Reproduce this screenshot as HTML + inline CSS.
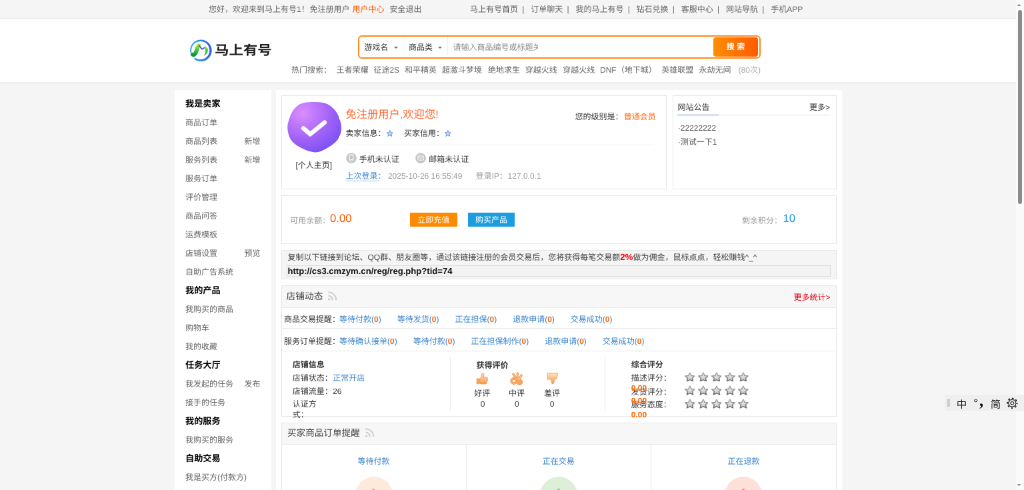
<!DOCTYPE html>
<html lang="zh-CN">
<head>
<meta charset="utf-8">
<title>马上有号 - 用户中心</title>
<style>
html,body{margin:0;padding:0;width:1024px;height:490px;overflow:hidden;background:#f5f5f5}
body{font-family:"Liberation Sans","Noto Sans CJK SC",sans-serif;font-size:12px;color:#666;text-rendering:geometricPrecision}
#page{position:absolute;left:0;top:0;width:1524px;height:735px;transform:scale(.666667);transform-origin:0 0;background:#f5f5f5;overflow:hidden;will-change:transform}
#page *{box-sizing:border-box}
.abs{position:absolute;white-space:nowrap}
a{color:inherit;text-decoration:none}
/* top bar */
#topbar{position:absolute;left:0;top:0;width:1524px;height:28px;background:#f5f5f5;border-bottom:1px solid #eaeaea}
#topbar .t{position:absolute;top:0;line-height:29px;white-space:nowrap;color:#666}
#topbar .sep{display:inline-block;width:19.2px;text-align:center;color:#666;text-indent:-3.6px}
/* header */
#header{position:absolute;left:0;top:29px;width:1524px;height:97px;background:#fff;border-bottom:3px solid #f0f0f0}
#sbox{position:absolute;left:537px;top:52.5px;width:604px;height:35px;border:2px solid #ff8a1a;border-radius:6px;background:#fff}
#sbtn{position:absolute;left:1070.2px;top:56.4px;width:66.6px;height:28.2px;border-radius:4px;background:linear-gradient(90deg,#ff8e00,#ff5a00);color:#fff;font-weight:bold;font-size:12px;line-height:28.4px;text-align:center}
.hot{position:absolute;top:95px;line-height:20px;white-space:nowrap;color:#666}
/* sidebar */
#side{position:absolute;left:262px;top:135px;width:145px;height:620px;background:#fff;padding:6.7px 0 0 16px}
#side div{height:28px;line-height:28px;position:relative;white-space:nowrap;color:#666}
#side div.h{font-weight:700;font-size:13.2px;color:#000;top:.7px}
#side div b{position:absolute;left:88.5px;top:0;font-weight:normal}
/* main */
#main{position:absolute;left:414px;top:135px;width:849px;height:620px;background:#fff}
.box{position:absolute;border:1px solid #e6e6e6;background:#fff}
.blue{color:#3b84cf}
.org{color:#ff6600}
.row span{display:inline-block;margin-right:24px}
.row i{font-style:normal;font-weight:bold;color:#ff6600}
</style>
</head>
<body>
<div id="page">

<div id="topbar">
  <span class="t" style="left:313px">您好，欢迎来到马上有号1！</span>
  <span class="t" style="left:464.5px">免注册用户</span>
  <span class="t" style="left:528.5px;color:#ff5a00">用户中心</span>
  <span class="t" style="left:584.5px">安全退出</span>
  <span class="t" style="left:705px">马上有号首页<span class="sep">|</span>订单聊天<span class="sep">|</span>我的马上有号<span class="sep">|</span>钻石兑换<span class="sep">|</span>客服中心<span class="sep">|</span>网站导航<span class="sep">|</span>手机APP</span>
</div>

<div id="header"></div>
<!-- logo -->
<svg class="abs" style="left:284px;top:59px" width="34" height="34" viewBox="0 0 34 34">
  <defs>
    <linearGradient id="lg1" x1="0" y1="0" x2="1" y2="0"><stop offset="0" stop-color="#43a8f9"/><stop offset=".45" stop-color="#2f8af5"/><stop offset="1" stop-color="#2a60e4"/></linearGradient>
    <linearGradient id="lg2" x1="0" y1="0" x2="0" y2="1"><stop offset="0" stop-color="#9be83a"/><stop offset=".55" stop-color="#3cc03c"/><stop offset="1" stop-color="#0f9640"/></linearGradient>
  </defs>
  <path d="M17.3 .5 A16.3 16.3 0 1 0 17.31 .5Z M16.7 3 A13.6 13.6 0 1 1 16.69 3Z" fill="url(#lg1)" fill-rule="evenodd"/>
  <path d="M-1 18.2 L6 19.4 L8.4 27.6 L6.2 30.4 L3 29 Z" fill="#fff"/>
  <path d="M5 22.8 C7.6 24.6 9.8 20.6 11.2 15.8 C12.2 12.2 13 10 14.2 9.4" fill="none" stroke="url(#lg2)" stroke-width="6" stroke-linecap="round"/>
  <path d="M1.6 17.6 L3.4 20.2 L2.2 21.6 Z" fill="#173fa8"/>
  <path d="M14.6 9.4 L18.9 14.8 L24.2 11.8" fill="none" stroke="#2a5fd6" stroke-width="1.8" stroke-linejoin="round" stroke-linecap="round"/>
  <path d="M23.6 10.8 C29.6 11.8 30 20.6 21.8 25 C24.8 20.6 24.8 16 22.8 13 Z" fill="url(#lg2)"/>
</svg>
<div class="abs" id="logotxt" style="left:322px;top:59px;font-size:19.5px;line-height:34px;font-weight:700;color:#222;letter-spacing:0px;transform:scaleX(1.1);transform-origin:0 50%">马上有号</div>

<div id="sbox"></div>
<div class="abs" style="left:546.3px;top:61.2px;line-height:20px;color:#333">游戏名</div>
<div class="abs" style="left:590.5px;top:69.5px;width:0;height:0;border:3px solid transparent;border-top:3.6px solid #666;border-bottom:0"></div>
<div class="abs" style="left:604px;top:55px;width:1px;height:30px;background:#eee"></div>
<div class="abs" style="left:613px;top:61.2px;line-height:20px;color:#333">商品类</div>
<div class="abs" style="left:656.5px;top:69.5px;width:0;height:0;border:3px solid transparent;border-top:3.6px solid #666;border-bottom:0"></div>
<div class="abs" style="left:671px;top:55px;width:1px;height:30px;background:#eee"></div>
<div class="abs" style="left:679.6px;top:61.2px;line-height:20px;color:#8a8a8a;width:127px;overflow:hidden">请输入商品编号或标题关</div>
<div id="sbtn">搜 索</div>

<span class="hot" style="left:437px">热门搜索：</span>
<span class="hot" style="left:504.5px">王者荣耀</span>
<span class="hot" style="left:560.4px">征途2S</span>
<span class="hot" style="left:607px">和平精英</span>
<span class="hot" style="left:662.9px">超激斗梦境</span>
<span class="hot" style="left:731.9px">绝地求生</span>
<span class="hot" style="left:787.8px">穿越火线</span>
<span class="hot" style="left:844.2px">穿越火线</span>
<span class="hot" style="left:900px">DNF（地下城）</span>
<span class="hot" style="left:992.3px">英雄联盟</span>
<span class="hot" style="left:1048.5px">永劫无间</span>
<span class="hot" style="left:1107.6px;color:#aaa">(80次)</span>

<div id="side">
  <div class="h">我是卖家</div>
  <div>商品订单</div>
  <div>商品列表<b>新增</b></div>
  <div>服务列表<b>新增</b></div>
  <div>服务订单</div>
  <div>评价管理</div>
  <div>商品问答</div>
  <div>运费模板</div>
  <div>店铺设置<b>预览</b></div>
  <div>自助广告系统</div>
  <div class="h">我的产品</div>
  <div>我购买的商品</div>
  <div>购物车</div>
  <div>我的收藏</div>
  <div class="h">任务大厅</div>
  <div>我发起的任务<b>发布</b></div>
  <div>接手的任务</div>
  <div class="h">我的服务</div>
  <div>我购买的服务</div>
  <div class="h">自助交易</div>
  <div>我是买方(付款方)</div>
  <div>我是卖方(收款方)</div>
</div>

<div id="main"></div>
<!-- user box -->
<div class="box" style="left:422px;top:142.5px;width:577.5px;height:141.5px"></div>
<svg class="abs" style="left:430px;top:151px" width="84" height="80" viewBox="0 0 84 80">
  <defs>
    <radialGradient id="av" cx="0.28" cy="0.22" r="0.95"><stop offset="0" stop-color="#dc8cff"/><stop offset="0.55" stop-color="#a062f7"/><stop offset="1" stop-color="#6f4cf2"/></radialGradient>
  </defs>
  <path d="M17.1 9.1 Q22.4 3.8 37.2 3.5 L42.8 3.5 Q57.6 3.2 64.6 9.2 L67.3 11.5 Q74.3 17.5 77.3 27.4 L78.5 31.1 Q81.5 41.0 78.5 49.2 L77.3 52.4 Q74.3 60.6 61.2 68.2 L56.1 71.0 Q43.0 78.6 28.6 71.6 L23.1 69.0 Q8.7 62.0 5.8 52.3 L4.7 48.7 Q1.8 39.0 5.1 29.6 L6.4 25.9 Q9.7 16.5 15.0 11.2 Z" fill="url(#av)" transform="translate(42 40.5) scale(1.055) translate(-42 -40)"/>
  <path d="M25.2 41.5 L35.3 50.3 L56.8 32.8" fill="none" stroke="#fff" stroke-width="6.6" stroke-linecap="round" stroke-linejoin="round"/>
</svg>
<div class="abs" style="left:443.4px;top:238px;line-height:20px;color:#333">[个人主页]</div>
<div class="abs" style="left:518.4px;top:160.2px;line-height:24px;font-size:16.3px;color:#ff6a33">免注册用户,欢迎您!</div>
<div class="abs" style="left:518.4px;top:190px;line-height:20px;color:#333">卖家信息：</div>
<svg class="abs star" style="left:579.6px;top:195.2px" width="9.6" height="9.6" viewBox="0 0 20 20"><path d="M10 1 L12.8 7.2 19.5 8 14.5 12.6 15.9 19.2 10 15.8 4.1 19.2 5.5 12.6 .5 8 7.2 7.2Z" fill="#c4dafa" stroke="#6b9ce6" stroke-width="2.2" stroke-linejoin="round"/></svg>
<div class="abs" style="left:606px;top:190px;line-height:20px;color:#333">买家信用：</div>
<svg class="abs star" style="left:666.6px;top:195.2px" width="9.6" height="9.6" viewBox="0 0 20 20"><path d="M10 1 L12.8 7.2 19.5 8 14.5 12.6 15.9 19.2 10 15.8 4.1 19.2 5.5 12.6 .5 8 7.2 7.2Z" fill="#c4dafa" stroke="#6b9ce6" stroke-width="2.2" stroke-linejoin="round"/></svg>
<div class="abs" style="left:518.4px;top:217px;width:464px;height:1px;background:#ececec"></div>
<!-- phone icon -->
<svg class="abs" style="left:518.8px;top:228.5px" width="16" height="16" viewBox="0 0 16 16"><defs><linearGradient id="gg" x1="0" y1="0" x2="0" y2="1"><stop offset="0" stop-color="#cdcdcd"/><stop offset="1" stop-color="#bdbdbd"/></linearGradient></defs><circle cx="8" cy="8" r="7.8" fill="url(#gg)"/><rect x="5.2" y="3.4" width="5.6" height="9.2" rx="1.2" fill="none" stroke="#f6f6f6" stroke-width="1.2"/><path d="M5.4 10.4 H10.6" stroke="#f6f6f6" stroke-width="1"/></svg>
<div class="abs" style="left:538.8px;top:228.5px;line-height:20px;color:#333">手机未认证</div>
<svg class="abs" style="left:623.2px;top:228.5px" width="16" height="16" viewBox="0 0 16 16"><circle cx="8" cy="8" r="7.8" fill="url(#gg)"/><rect x="3.8" y="5" width="8.4" height="6.2" rx=".8" fill="none" stroke="#f6f6f6" stroke-width="1.2"/><path d="M4.2 5.6 L8 8.6 11.8 5.6" fill="none" stroke="#f6f6f6" stroke-width="1.1"/></svg>
<div class="abs" style="left:643.2px;top:228.5px;line-height:20px;color:#333">邮箱未认证</div>
<div class="abs blue" style="left:518.4px;top:254px;line-height:20px">上次登录：<span style="position:absolute;left:0;top:17.2px;width:51px;height:1px;background:#9cc2ec"></span></div>
<div class="abs" style="left:581.9px;top:254px;line-height:20px;color:#999">2025-10-26 16:55:49</div>
<div class="abs" style="left:713.7px;top:254px;line-height:20px;color:#999">登录IP：</div>
<div class="abs" style="left:761.6px;top:254px;line-height:20px;color:#999">127.0.0.1</div>
<div class="abs" style="left:862.4px;top:164.5px;line-height:20px;color:#333">您的级别是：</div>
<div class="abs" style="left:935.7px;top:164.5px;line-height:20px;color:#ff6600">普通会员</div>

<!-- notice box -->
<div class="box" style="left:1008.5px;top:142.5px;width:246.5px;height:141.5px"></div>
<div class="abs" style="left:1016.4px;top:150.5px;line-height:20px;color:#333">网站公告</div>
<div class="abs" style="left:1214px;top:150.5px;line-height:20px;color:#333">更多&gt;</div>
<div class="abs" style="left:1016.4px;top:172.3px;width:229.4px;height:1px;background:#dedede"></div>
<div class="abs" style="left:1016.4px;top:171.9px;width:61.6px;height:1.4px;background:#5589ea"></div>
<div class="abs" style="left:1016.8px;top:182.3px;line-height:20px;color:#555">·22222222</div>
<div class="abs" style="left:1016.8px;top:203.3px;line-height:20px;color:#555">·测试一下1</div>

<!-- balance box -->
<div class="box" style="left:422px;top:293px;width:833px;height:72.5px"></div>
<div class="abs" style="left:435.2px;top:320.5px;line-height:20px;color:#999">可用余额：</div>
<div class="abs" style="left:495px;top:315.6px;line-height:24px;font-size:16.8px;color:#ff5a00">0.00</div>
<div class="abs" style="left:614.7px;top:318.6px;width:71.3px;height:21.8px;line-height:22.6px;background:#ff8a00;color:#fff;text-align:center">立即充值</div>
<div class="abs" style="left:701.7px;top:318.6px;width:70.5px;height:21.8px;line-height:22.6px;background:#1b9ee0;color:#fff;text-align:center">购买产品</div>
<div class="abs" style="left:1112.9px;top:320.5px;line-height:20px;color:#999">剩余积分：</div>
<div class="abs" style="left:1174.5px;top:315.6px;line-height:24px;font-size:16.8px;color:#1b9ee0">10</div>

<!-- referral box -->
<div class="box" style="left:422px;top:374.5px;width:833px;height:44.5px;background:#f5f5f5"></div>
<div class="abs" style="left:431.5px;top:376px;line-height:20px;color:#444">复制以下链接到论坛、QQ群、朋友圈等，通过该链接注册的会员交易后，您将获得每笔交易额<b style="color:#f00;font-size:13.4px">2%</b>做为佣金，鼠标点点，轻松赚钱^_^</div>
<div class="abs" style="left:429.5px;top:398px;width:816.5px;height:16.5px;border:1px solid #dcdcdc;background:#f3f3f3"></div>
<div class="abs" id="url" style="left:431.5px;top:397.2px;line-height:20px;color:#111;font-weight:bold;font-size:13.1px;letter-spacing:0">http://cs3.cmzym.cn/reg/reg.php?tid=74</div>

<!-- shop dynamics -->
<div class="box" style="left:422px;top:427.5px;width:833px;height:197px"></div>
<div class="abs" style="left:423px;top:428.5px;width:831px;height:33px;background:#f7f7f7;border-bottom:1px solid #e8e8e8"></div>
<div class="abs" style="left:429.6px;top:433.3px;line-height:24px;font-size:13.7px;color:#444">店铺动态</div>
<svg class="abs" style="left:491px;top:435.6px" width="15.5" height="15.5" viewBox="0 0 14 14" fill="none" stroke="#cfcfcf" stroke-width="1.9"><circle cx="2.4" cy="11.6" r="1.5" fill="#cfcfcf" stroke="none"/><path d="M1.2 6.8 A6 6 0 0 1 7.2 12.8"/><path d="M1.2 2 A10.8 10.8 0 0 1 12 12.8"/></svg>
<div class="abs" style="left:1190.4px;top:436px;line-height:20px;color:#e60012">更多统计&gt;</div>

<div class="abs" style="left:425.9px;top:469px;line-height:20px;color:#333">商品交易提醒：</div>
<div class="abs blue row" style="left:509.1px;top:469px;line-height:20px"><span>等待付款(<i>0</i>)</span><span>等待发货(<i>0</i>)</span><span>正在担保(<i>0</i>)</span><span>退款申请(<i>0</i>)</span><span>交易成功(<i>0</i>)</span></div>
<div class="abs" style="left:423px;top:492.3px;width:831px;height:1px;background:#e8e8e8"></div>
<div class="abs" style="left:425.9px;top:501.5px;line-height:20px;color:#333">服务订单提醒：</div>
<div class="abs blue row" style="left:509.1px;top:501.5px;line-height:20px"><span>等待确认接单(<i>0</i>)</span><span>等待付款(<i>0</i>)</span><span>正在担保制作(<i>0</i>)</span><span>退款申请(<i>0</i>)</span><span>交易成功(<i>0</i>)</span></div>
<div class="abs" style="left:423px;top:526px;width:831px;height:1px;background:#e8e8e8"></div>

<!-- shop info -->
<div class="abs" style="left:438.75px;top:537.3px;line-height:20px;color:#333;font-weight:bold">店铺信息</div>
<div class="abs" style="left:438.75px;top:557.2px;line-height:20px;color:#333">店铺状态：<span class="blue" style="position:absolute;left:60.4px">正常开店</span></div>
<div class="abs" style="left:438.75px;top:576.6px;line-height:20px;color:#333">店铺流量：<span style="position:absolute;left:60.4px">26</span></div>
<div class="abs" style="left:438.75px;top:595.6px;line-height:20px;color:#333">认证方</div>
<div class="abs" style="left:438.75px;top:611.7px;line-height:20px;color:#333">式：</div>
<div class="abs" style="left:674.5px;top:535.5px;width:1px;height:80px;background:#e8e8e8"></div>
<div class="abs" style="left:714.6px;top:538.4px;line-height:20px;color:#333;font-weight:bold">获得评价</div>
<!-- thumbs -->
<svg class="abs" style="left:0;top:0" width="0" height="0"><defs><linearGradient id="og" x1="0" y1="0" x2="0" y2="1"><stop offset="0" stop-color="#ffe2c4"/><stop offset="1" stop-color="#f89a48"/></linearGradient></defs></svg>
<svg class="abs" style="left:714px;top:557.5px" width="19" height="19.5" viewBox="0 0 19 19.5"><path d="M1.2 10 H4.6 V18 H1.2Z" fill="#f8a55c" stroke="#ee8a42" stroke-width=".7"/><path d="M5.6 10 C7.8 8.2 8.6 5.6 8.9 3 C9.1 1.2 11.8 1.4 11.9 4 C11.9 5.6 11.5 7 11 8.2 H15.8 C17.8 8.2 18 10.4 16.8 11 C17.8 11.8 17.4 13.4 16.4 13.8 C17 14.8 16.4 16 15.6 16.2 C16 17.2 15.2 18 14 18 H8 C7 18 6.4 17.6 5.6 17.2Z" fill="url(#og)" stroke="#ee8a42" stroke-width=".8" stroke-linejoin="round"/></svg>
<svg class="abs" style="left:765px;top:557.5px" width="20" height="20" viewBox="0 0 20 20"><g stroke="#ee8a42" stroke-width="3.3" stroke-linecap="round"><path d="M11 11.5 L4.8 3"/><path d="M12.2 11 L11.2 2"/><path d="M13.6 11.4 L17 5"/></g><path d="M9.5 11.5 C12 9.5 16 10 18 12.6 C19.6 15 18.6 18.6 15.4 19.2 C12.6 19.6 10.4 18 9.6 15.8Z" fill="#f9a55c" stroke="#ee8a42" stroke-width=".8"/><g stroke="#fbc088" stroke-width="1.9" stroke-linecap="round"><path d="M11 11.5 L4.8 3"/><path d="M12.2 11 L11.2 2"/><path d="M13.6 11.4 L17 5"/></g><path d="M6 8.2 A5.2 5.2 0 1 0 6.01 8.2Z M6 11.2 A2.2 2.2 0 1 1 5.99 11.2Z" fill="#f9ad68" fill-rule="evenodd" stroke="#ee8a42" stroke-width=".8"/></svg>
<svg class="abs" style="left:819.6px;top:557.8px" width="18" height="19" viewBox="0 0 20 20"><path d="M1.5 1.5 H17.5 Q18.7 1.5 18.4 3 L16.6 10 Q16.2 11.6 14.5 11.6 H12.6 Q12.7 15 12 17.6 Q11.4 19.6 9.6 19.2 Q8 18.8 8.4 16.5 Q8.8 13.6 6 11.6 H1.5Z" fill="url(#og)" stroke="#ee8a42" stroke-width=".8" stroke-linejoin="round"/></svg>
<div class="abs" style="left:693.2px;top:579.5px;width:60px;text-align:center;line-height:20px;color:#333">好评</div>
<div class="abs" style="left:694px;top:595.9px;width:60px;text-align:center;line-height:20px;color:#333">0</div>
<div class="abs" style="left:745px;top:579.5px;width:60px;text-align:center;line-height:20px;color:#333">中评</div>
<div class="abs" style="left:745.3px;top:595.9px;width:60px;text-align:center;line-height:20px;color:#333">0</div>
<div class="abs" style="left:797.9px;top:579.5px;width:60px;text-align:center;line-height:20px;color:#333">差评</div>
<div class="abs" style="left:798px;top:595.9px;width:60px;text-align:center;line-height:20px;color:#333">0</div>
<div class="abs" style="left:906.6px;top:535.5px;width:1px;height:80px;background:#e8e8e8"></div>
<div class="abs" style="left:946.8px;top:537.3px;line-height:20px;color:#333;font-weight:bold">综合评分</div>
<div class="abs" style="left:946.8px;top:557.3px;line-height:20px;color:#333">描述评分：</div>
<div class="abs" style="left:946.8px;top:577.9px;line-height:20px;color:#333">发货评分：</div>
<div class="abs" style="left:946.8px;top:596.9px;line-height:20px;color:#333">服务态度：</div>
<div class="abs" style="left:946.8px;top:571.5px;line-height:20px;color:#ff6600;font-weight:bold">0.00</div>
<div class="abs" style="left:946.8px;top:591px;line-height:20px;color:#ff6600;font-weight:bold">0.00</div>
<div class="abs" style="left:946.8px;top:612.2px;line-height:20px;color:#ff6600;font-weight:bold">0.00</div>
<svg class="abs" style="left:1026.6px;top:557.6px" width="15.8" height="14.8" viewBox="0 0 20 20" preserveAspectRatio="none"><path d="M10 1.4 L12.7 7.3 19.2 8 14.4 12.5 15.8 18.8 10 15.6 4.2 18.8 5.6 12.5 .8 8 7.3 7.3Z" fill="url(#sf)" stroke="url(#ss)" stroke-width="2" stroke-linejoin="round"/></svg>
<svg class="abs" style="left:1046.6px;top:557.6px" width="15.8" height="14.8" viewBox="0 0 20 20" preserveAspectRatio="none"><path d="M10 1.4 L12.7 7.3 19.2 8 14.4 12.5 15.8 18.8 10 15.6 4.2 18.8 5.6 12.5 .8 8 7.3 7.3Z" fill="url(#sf)" stroke="url(#ss)" stroke-width="2" stroke-linejoin="round"/></svg>
<svg class="abs" style="left:1066.7px;top:557.6px" width="15.8" height="14.8" viewBox="0 0 20 20" preserveAspectRatio="none"><path d="M10 1.4 L12.7 7.3 19.2 8 14.4 12.5 15.8 18.8 10 15.6 4.2 18.8 5.6 12.5 .8 8 7.3 7.3Z" fill="url(#sf)" stroke="url(#ss)" stroke-width="2" stroke-linejoin="round"/></svg>
<svg class="abs" style="left:1086.8px;top:557.6px" width="15.8" height="14.8" viewBox="0 0 20 20" preserveAspectRatio="none"><path d="M10 1.4 L12.7 7.3 19.2 8 14.4 12.5 15.8 18.8 10 15.6 4.2 18.8 5.6 12.5 .8 8 7.3 7.3Z" fill="url(#sf)" stroke="url(#ss)" stroke-width="2" stroke-linejoin="round"/></svg>
<svg class="abs" style="left:1106.8px;top:557.6px" width="15.8" height="14.8" viewBox="0 0 20 20" preserveAspectRatio="none"><path d="M10 1.4 L12.7 7.3 19.2 8 14.4 12.5 15.8 18.8 10 15.6 4.2 18.8 5.6 12.5 .8 8 7.3 7.3Z" fill="url(#sf)" stroke="url(#ss)" stroke-width="2" stroke-linejoin="round"/></svg>
<svg class="abs" style="left:1026.6px;top:577.8px" width="15.8" height="14.8" viewBox="0 0 20 20" preserveAspectRatio="none"><path d="M10 1.4 L12.7 7.3 19.2 8 14.4 12.5 15.8 18.8 10 15.6 4.2 18.8 5.6 12.5 .8 8 7.3 7.3Z" fill="url(#sf)" stroke="url(#ss)" stroke-width="2" stroke-linejoin="round"/></svg>
<svg class="abs" style="left:1046.6px;top:577.8px" width="15.8" height="14.8" viewBox="0 0 20 20" preserveAspectRatio="none"><path d="M10 1.4 L12.7 7.3 19.2 8 14.4 12.5 15.8 18.8 10 15.6 4.2 18.8 5.6 12.5 .8 8 7.3 7.3Z" fill="url(#sf)" stroke="url(#ss)" stroke-width="2" stroke-linejoin="round"/></svg>
<svg class="abs" style="left:1066.7px;top:577.8px" width="15.8" height="14.8" viewBox="0 0 20 20" preserveAspectRatio="none"><path d="M10 1.4 L12.7 7.3 19.2 8 14.4 12.5 15.8 18.8 10 15.6 4.2 18.8 5.6 12.5 .8 8 7.3 7.3Z" fill="url(#sf)" stroke="url(#ss)" stroke-width="2" stroke-linejoin="round"/></svg>
<svg class="abs" style="left:1086.8px;top:577.8px" width="15.8" height="14.8" viewBox="0 0 20 20" preserveAspectRatio="none"><path d="M10 1.4 L12.7 7.3 19.2 8 14.4 12.5 15.8 18.8 10 15.6 4.2 18.8 5.6 12.5 .8 8 7.3 7.3Z" fill="url(#sf)" stroke="url(#ss)" stroke-width="2" stroke-linejoin="round"/></svg>
<svg class="abs" style="left:1106.8px;top:577.8px" width="15.8" height="14.8" viewBox="0 0 20 20" preserveAspectRatio="none"><path d="M10 1.4 L12.7 7.3 19.2 8 14.4 12.5 15.8 18.8 10 15.6 4.2 18.8 5.6 12.5 .8 8 7.3 7.3Z" fill="url(#sf)" stroke="url(#ss)" stroke-width="2" stroke-linejoin="round"/></svg>
<svg class="abs" style="left:1026.6px;top:597.8px" width="15.8" height="14.8" viewBox="0 0 20 20" preserveAspectRatio="none"><path d="M10 1.4 L12.7 7.3 19.2 8 14.4 12.5 15.8 18.8 10 15.6 4.2 18.8 5.6 12.5 .8 8 7.3 7.3Z" fill="url(#sf)" stroke="url(#ss)" stroke-width="2" stroke-linejoin="round"/></svg>
<svg class="abs" style="left:1046.6px;top:597.8px" width="15.8" height="14.8" viewBox="0 0 20 20" preserveAspectRatio="none"><path d="M10 1.4 L12.7 7.3 19.2 8 14.4 12.5 15.8 18.8 10 15.6 4.2 18.8 5.6 12.5 .8 8 7.3 7.3Z" fill="url(#sf)" stroke="url(#ss)" stroke-width="2" stroke-linejoin="round"/></svg>
<svg class="abs" style="left:1066.7px;top:597.8px" width="15.8" height="14.8" viewBox="0 0 20 20" preserveAspectRatio="none"><path d="M10 1.4 L12.7 7.3 19.2 8 14.4 12.5 15.8 18.8 10 15.6 4.2 18.8 5.6 12.5 .8 8 7.3 7.3Z" fill="url(#sf)" stroke="url(#ss)" stroke-width="2" stroke-linejoin="round"/></svg>
<svg class="abs" style="left:1086.8px;top:597.8px" width="15.8" height="14.8" viewBox="0 0 20 20" preserveAspectRatio="none"><path d="M10 1.4 L12.7 7.3 19.2 8 14.4 12.5 15.8 18.8 10 15.6 4.2 18.8 5.6 12.5 .8 8 7.3 7.3Z" fill="url(#sf)" stroke="url(#ss)" stroke-width="2" stroke-linejoin="round"/></svg>
<svg class="abs" style="left:1106.8px;top:597.8px" width="15.8" height="14.8" viewBox="0 0 20 20" preserveAspectRatio="none"><path d="M10 1.4 L12.7 7.3 19.2 8 14.4 12.5 15.8 18.8 10 15.6 4.2 18.8 5.6 12.5 .8 8 7.3 7.3Z" fill="url(#sf)" stroke="url(#ss)" stroke-width="2" stroke-linejoin="round"/></svg>


<svg class="abs" style="left:0;top:0" width="0" height="0"><defs><linearGradient id="sf" x1="0" y1="0" x2="0" y2="1"><stop offset="0" stop-color="#f4f4f4"/><stop offset="1" stop-color="#c4c4c4"/></linearGradient><linearGradient id="ss" x1="0" y1="0" x2="0" y2="1"><stop offset="0" stop-color="#b0b0b0"/><stop offset="1" stop-color="#6a6a6a"/></linearGradient></defs></svg>
<!-- buyer orders -->
<div class="box" style="left:422px;top:633.5px;width:833px;height:140px"></div>
<div class="abs" style="left:423px;top:634.5px;width:831px;height:32px;background:#f7f7f7;border-bottom:1px solid #e8e8e8"></div>
<div class="abs" style="left:431px;top:637.6px;line-height:24px;font-size:13.6px;color:#444">买家商品订单提醒</div>
<svg class="abs" style="left:546.6px;top:641.4px" width="15.5" height="15.5" viewBox="0 0 14 14" fill="none" stroke="#cfcfcf" stroke-width="1.9"><circle cx="2.4" cy="11.6" r="1.5" fill="#cfcfcf" stroke="none"/><path d="M1.2 6.8 A6 6 0 0 1 7.2 12.8"/><path d="M1.2 2 A10.8 10.8 0 0 1 12 12.8"/></svg>
<div class="abs" style="left:699px;top:666.5px;width:1px;height:110px;background:#e8e8e8"></div>
<div class="abs" style="left:976.3px;top:666.5px;width:1px;height:110px;background:#e8e8e8"></div>
<div class="abs blue" style="left:460.5px;top:682.2px;width:200px;text-align:center;line-height:20px">等待付款</div>
<div class="abs blue" style="left:737.75px;top:682.2px;width:200px;text-align:center;line-height:20px">正在交易</div>
<div class="abs blue" style="left:1015.4px;top:682.2px;width:200px;text-align:center;line-height:20px">正在退款</div>
<div class="abs" style="left:532.5px;top:714.5px;width:56px;height:56px;border-radius:50%;background:#fdeadb"></div>
<div class="abs" style="left:809.75px;top:714.5px;width:56px;height:56px;border-radius:50%;background:#ddefd8"></div>
<div class="abs" style="left:1087.4px;top:714.5px;width:56px;height:56px;border-radius:50%;background:#fde0da"></div>

<div class="abs" style="left:558px;top:733px;width:4px;height:3px;border-radius:2px 2px 0 0;background:#f4888a"></div>
<div class="abs" style="left:835.5px;top:733px;width:4px;height:3px;border-radius:2px 2px 0 0;background:#6cc070"></div>
<div class="abs" style="left:1113px;top:733px;width:4px;height:3px;border-radius:2px 2px 0 0;background:#f07a6a"></div>

</div>
<div id="ov" style="position:absolute;left:0;top:0;width:1024px;height:490px;will-change:transform;pointer-events:none">
<div id="sb" style="position:absolute;left:1016px;top:0;width:8px;height:490px;background:#fafafa"></div>
<div style="position:absolute;left:1017.6px;top:9.5px;width:4.7px;height:194.2px;border-radius:2.4px;background:#8b8b8b"></div>
<div style="position:absolute;left:1017.2px;top:3.5px;width:0;height:0;border-left:2.75px solid transparent;border-right:2.75px solid transparent;border-bottom:2.7px solid #8b8b8b"></div>
<div style="position:absolute;left:1017.3px;top:483.8px;width:0;height:0;border-left:2.6px solid transparent;border-right:2.6px solid transparent;border-top:2.6px solid #8b8b8b"></div>
<div id="ime" style="position:absolute;left:944.5px;top:394.7px;width:79.5px;height:16.5px;background:#efefef"></div>
<div style="position:absolute;left:947.2px;top:399px;width:2.6px;height:8px;background:#d0d0d0"></div>
<div id="i1" style="position:absolute;left:956.4px;top:398.2px;line-height:15px;font-size:10.2px;color:#111;white-space:nowrap">中</div>
<div id="i4" style="position:absolute;left:990.6px;top:398px;line-height:15px;font-size:10.2px;color:#111;white-space:nowrap">简</div>
<svg style="position:absolute;left:970px;top:392px;overflow:visible" width="18" height="20" viewBox="0 0 18 20"><text x="3.6" y="14.6" font-size="11.5" fill="#111" font-family="Liberation Sans, sans-serif">°</text><text x="9.2" y="13.8" font-size="17" font-weight="bold" fill="#111" font-family="Liberation Serif, serif">,</text></svg>
<svg style="position:absolute;left:1006.2px;top:396.9px" width="12.4" height="12.4" viewBox="-6.2 -6.2 12.4 12.4" fill="none" stroke="#333"><circle r="4.85" stroke-width="1.25" stroke-dasharray="1.905 1.905" stroke-dashoffset="0.952"/><circle r="3.75" stroke-width=".95"/><circle r="1.6" stroke-width=".9"/></svg>
</div>
</body>
</html>
